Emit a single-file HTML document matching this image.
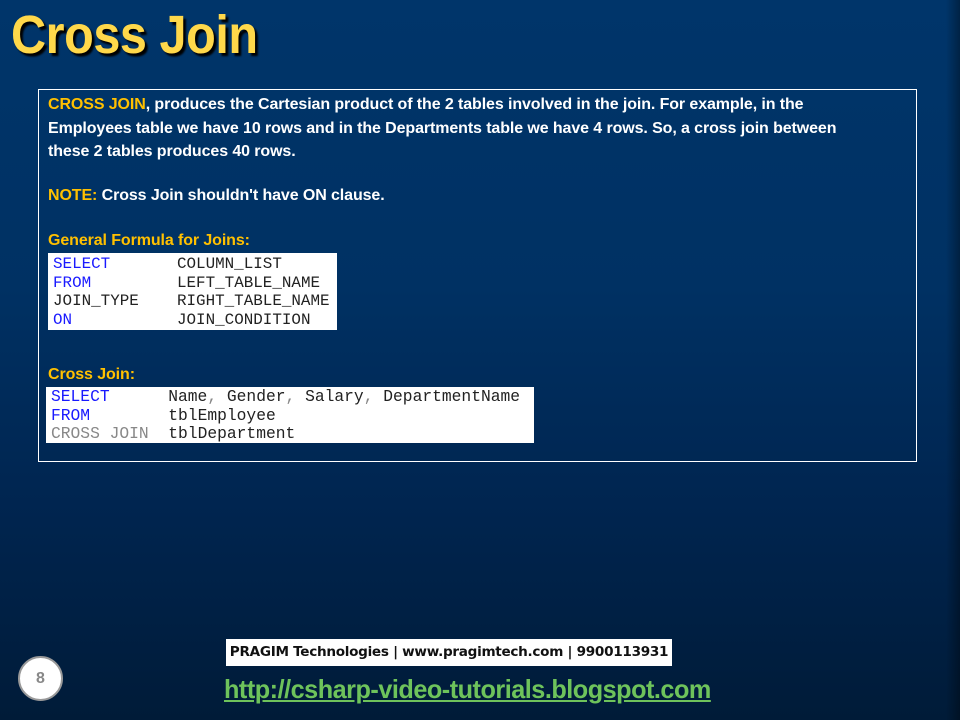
<!DOCTYPE html>
<html><head><style>
*{margin:0;padding:0}
body{width:960px;height:720px;overflow:hidden;position:relative;background:linear-gradient(180deg,#00356a 0%,#003163 40%,#002550 70%,#001b38 100%);font-family:"Liberation Sans",sans-serif}
.edge{position:absolute;right:0;top:0;width:14px;height:720px;background:linear-gradient(90deg,rgba(0,0,0,0),rgba(0,0,0,0.35))}
h1{position:absolute;left:11px;top:4px;font-size:54px;font-weight:bold;color:#ffd84a;text-shadow:3px 3px 2px #000;transform:scaleX(0.9);transform-origin:left top;letter-spacing:-0.5px;white-space:nowrap}
.box{position:absolute;left:38px;top:89px;width:877px;height:371px;border:1px solid #fff}
.t{position:absolute;left:48px;color:#fff;font-weight:bold;font-size:16px;letter-spacing:-0.1px;white-space:nowrap}
.y{color:#ffc000}
.code{position:absolute;background:#fff;font-family:"Liberation Mono",monospace;font-size:16.3px;line-height:18.7px;color:#222;white-space:pre;padding:1px 0 0 5px;box-sizing:border-box;overflow:hidden}
.b{color:#1a1aff}.g{color:#888}
.foot{position:absolute;left:226px;top:639px;width:446px;height:27px;background:#fff;font-size:13.6px;font-weight:bold;color:#111;line-height:27px;text-align:center;font-family:"DejaVu Sans",sans-serif;letter-spacing:-0.3px;white-space:nowrap}
.url{position:absolute;left:224px;top:674px;font-size:26px;color:#6ec35b;text-decoration:underline;font-weight:bold;transform:scaleX(0.97);transform-origin:left top;white-space:nowrap;letter-spacing:-0.5px}
.num{position:absolute;left:18px;top:656px;width:45px;height:45px;border-radius:50%;background:#fff;border:2px solid #999;box-sizing:border-box;text-align:center;line-height:41px;color:#888;font-weight:bold;font-size:16px}
</style></head><body>
<div class="edge"></div>
<h1>Cross Join</h1>
<div class="box"></div>
<div class="t" style="top:96px"><span class="y">CROSS JOIN</span>, produces the Cartesian product of the 2 tables involved in the join. For example, in the</div>
<div class="t" style="top:120px">Employees table we have 10 rows and in the Departments table we have 4 rows. So, a cross join between</div>
<div class="t" style="top:143px">these 2 tables produces 40 rows.</div>
<div class="t" style="top:187px"><span class="y">NOTE:</span> Cross Join shouldn't have ON clause.</div>
<div class="t y" style="top:232px">General Formula for Joins:</div>
<div class="code" style="left:48px;top:253px;width:289px;height:77px;font-size:15.9px;padding-top:2px"><span class="b">SELECT</span>       COLUMN_LIST
<span class="b">FROM</span>         LEFT_TABLE_NAME
JOIN_TYPE    RIGHT_TABLE_NAME
<span class="b">ON</span>           JOIN_CONDITION</div>
<div class="t y" style="top:366px">Cross Join:</div>
<div class="code" style="left:46px;top:387px;width:488px;height:56px"><span class="b">SELECT</span>      Name<span class="g">,</span> Gender<span class="g">,</span> Salary<span class="g">,</span> DepartmentName
<span class="b">FROM</span>        tblEmployee
<span class="g">CROSS JOIN</span>  tblDepartment</div>
<div class="foot">PRAGIM Technologies | www.pragimtech.com | 9900113931</div>
<div class="url">http://csharp-video-tutorials.blogspot.com</div>
<div class="num">8</div>
</body></html>
